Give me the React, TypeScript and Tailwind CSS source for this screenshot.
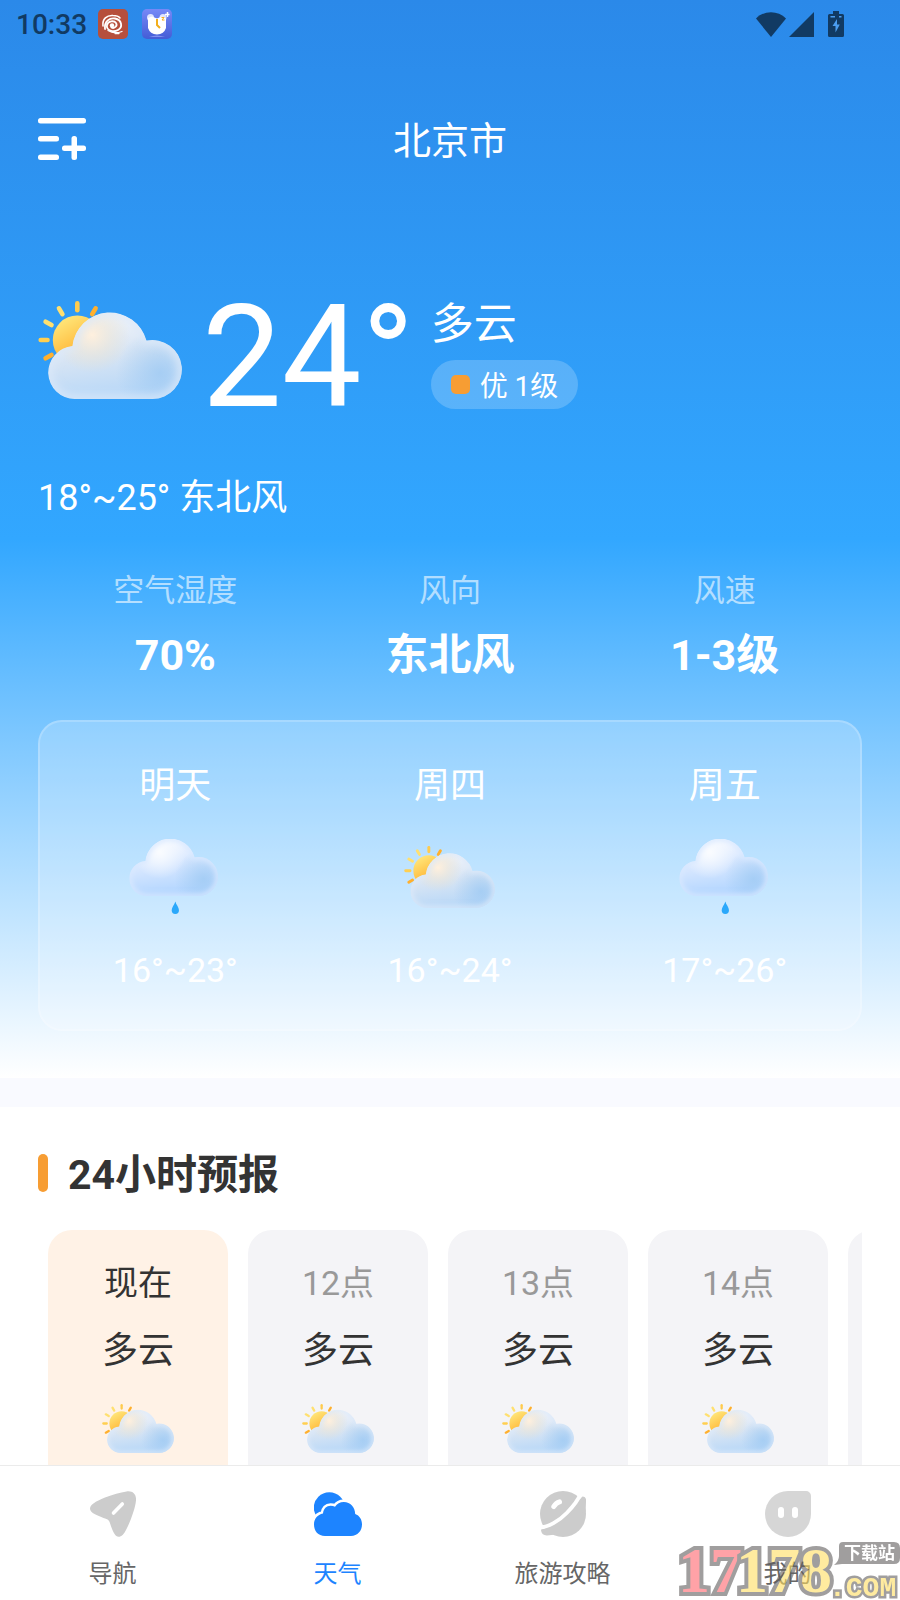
import type { ReactNode } from 'react'
import clsx from 'clsx'

const CLOUD =
  'M36.5 98A26.5 26.5 0 0 1 34.4 45.1A37.8 37.8 0 0 1 108.5 39.6A29.5 29.5 0 1 1 114.5 98Z'

const RAYS = [
  { angle: -120, color: '#ffb02e' },
  { angle: -90, color: '#ffcf50' },
  { angle: -60, color: '#ffe070' },
  { angle: -30, color: '#ffe070' },
  { angle: 0, color: '#ffcb4d' },
  { angle: 30, color: '#ffb02e' },
]

const STATS = [
  { label: '空气湿度', value: '70%' },
  { label: '风向', value: '东北风' },
  { label: '风速', value: '1-3级' },
]

const DAYS = [
  { name: '明天', icon: 'rain', range: '16°~23°' },
  { name: '周四', icon: 'cloudy', range: '16°~24°' },
  { name: '周五', icon: 'rain', range: '17°~26°' },
]

const HOURS = [
  { time: '现在', text: '多云' },
  { time: '12点', text: '多云' },
  { time: '13点', text: '多云' },
  { time: '14点', text: '多云' },
  { time: '15点', text: '多云' },
]

// Gradients shared by all weather icons
function WeatherDefs() {
  return (
    <svg className="absolute size-0" aria-hidden="true">
      <defs>
        <linearGradient id="sun" x1="0.2" y1="0.1" x2="0.6" y2="0.8">
          <stop offset="0" stopColor="#ffe477" />
          <stop offset="1" stopColor="#ffb02e" />
        </linearGradient>
        <linearGradient id="cloud" x1="0.4" y1="0" x2="0.6" y2="1">
          <stop offset="0" stopColor="#f3f5fb" />
          <stop offset="0.5" stopColor="#d6e4f4" />
          <stop offset="1" stopColor="#b4d6f8" />
        </linearGradient>
        <linearGradient id="rain-cloud" x1="0.4" y1="0" x2="0.6" y2="1">
          <stop offset="0" stopColor="#f5f8ff" />
          <stop offset="0.5" stopColor="#d3e5ff" />
          <stop offset="1" stopColor="#add3ff" />
        </linearGradient>
        <radialGradient id="warm" gradientUnits="userSpaceOnUse" cx="54" cy="34" r="38">
          <stop offset="0" stopColor="#fff0de" />
          <stop offset="0.5" stopColor="#f0e6d3" stopOpacity="0.5" />
          <stop offset="1" stopColor="#e6e0cc" stopOpacity="0" />
        </radialGradient>
        <radialGradient id="shine" gradientUnits="userSpaceOnUse" cx="56" cy="32" r="40">
          <stop offset="0" stopColor="#fafcff" />
          <stop offset="1" stopColor="#fafcff" stopOpacity="0" />
        </radialGradient>
        <radialGradient id="shade" gradientUnits="userSpaceOnUse" cx="122" cy="72" r="44">
          <stop offset="0" stopColor="#9fcaf3" stopOpacity="0.8" />
          <stop offset="1" stopColor="#9fcaf3" stopOpacity="0" />
        </radialGradient>
        <clipPath id="cloud-clip">
          <path d={CLOUD} />
        </clipPath>
        <filter id="soft" x="-20%" y="-20%" width="140%" height="140%">
          <feGaussianBlur stdDeviation="4" />
        </filter>
      </defs>
    </svg>
  )
}

function CloudyIcon({ className }: { className: string }) {
  return (
    <svg viewBox="0 0 144 98" className={className} role="img" aria-label="多云">
      {RAYS.map(({ angle, color }) => (
        <line
          key={angle}
          x1="39.3"
          x2="39.3"
          y1="2.4"
          y2="9.2"
          stroke={color}
          strokeWidth="4.6"
          strokeLinecap="round"
          transform={`rotate(${angle} 39.3 39)`}
        />
      ))}
      <circle cx="39.3" cy="39" r="24.5" fill="url(#sun)" />
      <g clipPath="url(#cloud-clip)">
        <path d={CLOUD} fill="url(#cloud)" />
        <path d={CLOUD} fill="url(#shade)" />
        <path d={CLOUD} fill="url(#warm)" />
        <path d={CLOUD} fill="none" stroke="#dce9f9" strokeWidth="7" filter="url(#soft)" />
      </g>
    </svg>
  )
}

function RainIcon({ className }: { className: string }) {
  return (
    <svg viewBox="10 12 138 113" className={className} role="img" aria-label="小雨">
      <g clipPath="url(#cloud-clip)">
        <path d={CLOUD} fill="url(#rain-cloud)" />
        <path d={CLOUD} fill="url(#shade)" />
        <path d={CLOUD} fill="url(#shine)" />
        <path d={CLOUD} fill="none" stroke="#d8e8ff" strokeWidth="7" filter="url(#soft)" />
      </g>
      <path d="M79.5 106C81 111 85 115 85 119.500A5.500 5.500 0 0 1 74 119.500C74 115 78 111 79.500 106Z" fill="#2ba8fb" />
    </svg>
  )
}

function StatusBar() {
  return (
    <div className="flex h-12 items-center pl-4 pr-14 text-[#113a63]">
      <span className="w-[82px] pt-0.5 text-[28px] font-medium leading-8">10:33</span>
      <svg viewBox="0 0 30 30" className="size-[30px]">
        <rect width="30" height="30" rx="5" fill="#b64f3c" />
        <g fill="none" stroke="#fff" strokeLinecap="round">
          <path d="M5 17C4 10 9 6 15 6.500C20 6.500 22 9 22 9" strokeWidth="1.600" />
          <path d="M7 20C6 12 12 8.500 17 9.500C24 11 25 18 20 21C15 24 8 21 9 16C10 12 16 11 18 14C20 17 16 20 13.500 18.500" strokeWidth="1.800" />
          <path d="M10 21.500C14 24 20 24 24 22.500M17 24.500H21" strokeWidth="1.300" />
        </g>
        <circle cx="14" cy="16.500" r="2.200" fill="#fff" />
      </svg>
      <svg viewBox="0 0 30 30" className="ml-3.5 size-[30px]">
        <defs>
          <linearGradient id="clock" x1="0" y1="0" x2="0" y2="1">
            <stop offset="0" stopColor="#7789f7" />
            <stop offset="1" stopColor="#435dd6" />
          </linearGradient>
        </defs>
        <rect width="30" height="30" rx="5" fill="url(#clock)" />
        <circle cx="8.500" cy="8.500" r="3.500" fill="#dfe4ff" />
        <circle cx="21" cy="8.500" r="3.500" fill="#dfe4ff" />
        <path d="M6 9L10 7.500L15 9.500L20 7.500L24 9.500V19Q22 25 15 25.500Q8 25 6 19Z" fill="#fff" />
        <path d="M25.500 3V8M23 5.500H27.500" stroke="#fff" strokeWidth="1.500" />
        <path d="M15 10V16L18 19" fill="none" stroke="#f3ae1b" strokeWidth="2" />
        <path d="M19.500 8.500H22L20 11H22.500" fill="none" stroke="#f3ae1b" />
        <path d="M7 28Q15 25 23 28Z" fill="#8191ef" />
      </svg>
      <div className="ml-auto flex items-center">
        <svg viewBox="0 0 30 25" className="h-[25px] w-[30px]" fill="currentColor">
          <path d="M0 6.500C8-2 22-2 30 6.500L15 25Z" />
        </svg>
        <svg viewBox="0 0 25 25" className="ml-[3px] size-[25px]" fill="currentColor">
          <path d="M25 0V25H0Z" />
        </svg>
        <svg viewBox="0 0 16 26" className="ml-3.5 h-[26px] w-4" fill="currentColor">
          <path d="M5 0H11V3H14.500A1.500 1.500 0 0 1 16 4.500V24.500A1.500 1.500 0 0 1 14.500 26H1.500A1.500 1.500 0 0 1 0 24.500V4.500A1.500 1.500 0 0 1 1.500 3H5Z" />
          <path d="M9 8L4.500 15H7.500V21.500L11.800 13.500H9ZM2.500 5H7V6.500H2.500ZM11 5H13.500V6.500H11Z" fill="#4b9df0" />
        </svg>
      </div>
    </div>
  )
}

function Header() {
  return (
    <header className="grid h-[182px] grid-cols-3 items-center px-[38px]">
      <button type="button" aria-label="添加城市" className="justify-self-start">
        <svg viewBox="0 0 48 42" className="h-[42px] w-12" fill="#fff">
          <rect width="48" height="5.500" rx="2.500" />
          <rect y="18" width="21" height="5.500" rx="2.500" />
          <rect y="36.500" width="21" height="5.500" rx="2.500" />
          <rect x="24" y="27.500" width="24" height="5.500" rx="2.500" />
          <rect x="33.500" y="18" width="5.500" height="24" rx="2.500" />
        </svg>
      </button>
      <h1 className="pt-1 text-center text-[38px] leading-[44px]">北京市</h1>
    </header>
  )
}

function CurrentWeather() {
  return (
    <div className="mt-14 px-[38px]">
      <div className="flex items-start">
        <CloudyIcon className="mt-[15px] h-[98px] w-36" />
        <span className="ml-5 text-[142px] leading-[144px]">24°</span>
        <div className="ml-4 mt-4 flex flex-col items-start gap-3.5">
          <span className="text-[43px] leading-[44px]">多云</span>
          <span className="flex items-center gap-2.5 rounded-full bg-white/20 px-5 text-[28px]">
            <span className="size-[19px] rounded-[5px] bg-[#f79d33]" />
            <span className="pt-1 leading-[45px]">优 1级</span>
          </span>
        </div>
      </div>
      <p className="mt-[46px] text-[36px] leading-[44px]">18°~25° 东北风</p>
    </div>
  )
}

function DailyForecast() {
  return (
    <div className="mx-[38px] mt-10 grid grid-cols-3 rounded-3xl bg-white/20 pb-[41px] pt-[41px] inset-ring-2 inset-ring-white/20">
      {DAYS.map(({ name, icon, range }) => (
        <div key={name} className="flex flex-col items-center">
          <span className="text-[36px] leading-[50px]">{name}</span>
          <div className="mt-7 flex h-[75px] items-center">
            {icon === 'rain' ? (
              <RainIcon className="h-[75px] w-[92px]" />
            ) : (
              <CloudyIcon className="h-[62px] w-[91px]" />
            )}
          </div>
          <span className="mt-9 text-[34px] leading-10">{range}</span>
        </div>
      ))}
    </div>
  )
}

function HourlyForecast() {
  return (
    <section className="px-[38px] pt-[41px]">
      <h2 className="flex items-center gap-5 text-[41px] font-bold text-[#333]">
        <span className="h-[38px] w-2.5 rounded-full bg-[#f79d33]" />
        <span className="pt-1 leading-[46px]">24小时预报</span>
      </h2>
      <div className="mt-8 flex gap-5 overflow-hidden pl-2.5">
        {HOURS.map(({ time, text }, i) => (
          <div
            key={time}
            className={clsx(
              'flex w-[180px] shrink-0 flex-col items-center rounded-3xl pb-10 pt-7',
              i === 0 ? 'bg-[#fff2e6]' : 'bg-[#f4f4f7]'
            )}
          >
            <span className={clsx('text-[34px] leading-[50px]', i === 0 ? 'text-[#333]' : 'text-[#999]')}>
              {time}
            </span>
            <span className="mt-[18px] text-[36px] leading-[50px] text-[#333]">{text}</span>
            <CloudyIcon className="mt-7 h-[49px] w-[72px]" />
          </div>
        ))}
      </div>
    </section>
  )
}

function TabItem({ label, active, children }: { label: string; active?: boolean; children: ReactNode }) {
  return (
    <a
      href="#"
      aria-current={active ? 'page' : undefined}
      className={clsx('flex flex-col items-center pb-2.5 pt-[25px]', active ? 'text-[#1d84ff]' : 'text-[#666]')}
    >
      {children}
      <span className="mt-[21px] text-2xl leading-8">{label}</span>
    </a>
  )
}

function TabBar() {
  return (
    <nav className="relative z-10 grid shrink-0 grid-cols-4 border-t border-[#ebebeb] bg-white">
      <TabItem label="导航">
        <svg viewBox="0 0 46 46" className="size-[46px]">
          <path
            d="M0 17.500C0 14 5 10.500 15 6.500C23 3.500 30 1.500 36.500.500C43-.500 46.500 3.500 46 9.500C45.500 14 44.500 17.500 43.500 20.500C41.500 27 39.500 32 36.500 38C34 43.500 31 46 28.500 45.800C25.500 45.500 23.500 42 21.500 36.500C20 32.500 19.500 29.500 17.600 28.500C15 27.500 9 25.500 5 23.300C1.500 21.500 0 19.500 0 17.500Z"
            fill="#ccc"
          />
          <path d="M23.500 22L32.300 13" stroke="#fff" strokeWidth="3.600" strokeLinecap="round" />
        </svg>
      </TabItem>
      <TabItem label="天气" active>
        <svg viewBox="0 -1 48 46" className="h-[46px] w-12" fill="#1d84ff">
          <circle cx="15.300" cy="15.700" r="15.500" />
          <path
            d="M11 44C4 44 0 39 0 32.500C0 26.500 3.500 22.800 9 21.500C9.500 16.500 12.500 13.700 16.500 13.700C18.300 13.700 19.800 14.100 21 14.800C23 11.800 26 10 29.800 10C36.500 10 41 15 41.200 22C45.500 23.500 48 27.500 48 32.300C48 39 43.500 44 37 44Z"
            stroke="#fff"
            strokeWidth="5"
          />
          <path d="M11 44C4 44 0 39 0 32.500C0 26.500 3.500 22.800 9 21.500C9.500 16.500 12.500 13.700 16.500 13.700C18.300 13.700 19.800 14.100 21 14.800C23 11.800 26 10 29.800 10C36.500 10 41 15 41.200 22C45.500 23.500 48 27.500 48 32.300C48 39 43.500 44 37 44Z" />
        </svg>
      </TabItem>
      <TabItem label="旅游攻略">
        <svg viewBox="0 0 46 46" className="size-[46px]" fill="#ccc">
          <circle cx="23" cy="23" r="23" />
          <path d="M38 10L42.500 5.500C45.500 5.500 46.500 8 46 11L45.600 21L36 22Z" />
          <path d="M1 38.500C1 42.500 3.500 44.500 7 44.400L14 43.800L16 34Z" />
          <path d="M0 36.300C8 36.300 19 30 27 21.700C33 15.500 38 9.500 40.500 3" fill="none" stroke="#fff" strokeWidth="3.800" />
          <path d="M13.800 15.500C15 13.500 17 11.500 19.500 10.800" fill="none" stroke="#fff" strokeWidth="5" strokeLinecap="round" />
        </svg>
      </TabItem>
      <TabItem label="我的">
        <svg viewBox="0 0 46 46" className="size-[46px]" fill="#d6d6d6">
          <path d="M23 0H41A5 5 0 0 1 46 5V23A23 23 0 1 1 23 0Z" />
          <rect x="13" y="16" width="6" height="11" rx="3" fill="#fff" />
          <rect x="27" y="16" width="6" height="11" rx="3" fill="#fff" />
        </svg>
      </TabItem>
    </nav>
  )
}

function SiteMark() {
  return (
    <svg
      viewBox="0 0 226 62"
      className="pointer-events-none absolute bottom-0 right-0 z-20 h-[62px] w-[226px] opacity-60"
      role="img"
      aria-label="17178.com 下载站"
    >
      <g
        className="font-['Liberation_Serif',serif] font-bold"
        stroke="#625f5f"
        strokeWidth="8"
        fontSize="64"
        paintOrder="stroke"
      >
        <text x="4" y="54" fill="#ff666e">17</text>
        <text x="62" y="54" fill="#ffdf61">178</text>
      </g>
      <path d="M169 4H220Q226 4 226 10V20Q226 26 220 26H168L160 27Q165 23 165 18V8Q165 4 169 4Z" fill="#625f5f" />
      <text x="170" y="21" fontSize="17" fontWeight="700" fill="#fff">下载站</text>
      <text
        x="155"
        y="58"
        fontSize="28"
        className="font-['Liberation_Mono',monospace] font-bold"
        fill="#ffdf61"
        stroke="#625f5f"
        strokeWidth="5"
        paintOrder="stroke"
      >
        .COM
      </text>
    </svg>
  )
}

export default function App() {
  return (
    <div className="relative flex h-screen flex-col overflow-hidden bg-white font-['Roboto','Noto_Sans_CJK_SC',sans-serif]">
      <WeatherDefs />
      <main className="min-h-0 flex-1 overflow-y-auto [scrollbar-width:none]">
        <div className="bg-[linear-gradient(to_bottom,#2b89e9_0%,#32a7ff_50%,#ffffff_100%)] pb-[47px] text-white">
          <StatusBar />
          <Header />
          <CurrentWeather />
          <dl className="mx-[38px] mt-[51px] grid grid-cols-3 text-center">
            {STATS.map(({ label, value }) => (
              <div key={label}>
                <dt className="text-[31px] leading-10 text-white/60">{label}</dt>
                <dd className="mt-[19px] text-[43px] font-bold leading-[50px]">{value}</dd>
              </div>
            ))}
          </dl>
          <DailyForecast />
        </div>
        <div className="h-[29px] bg-[#f9faff]" />
        <HourlyForecast />
      </main>
      <TabBar />
      <SiteMark />
    </div>
  )
}
